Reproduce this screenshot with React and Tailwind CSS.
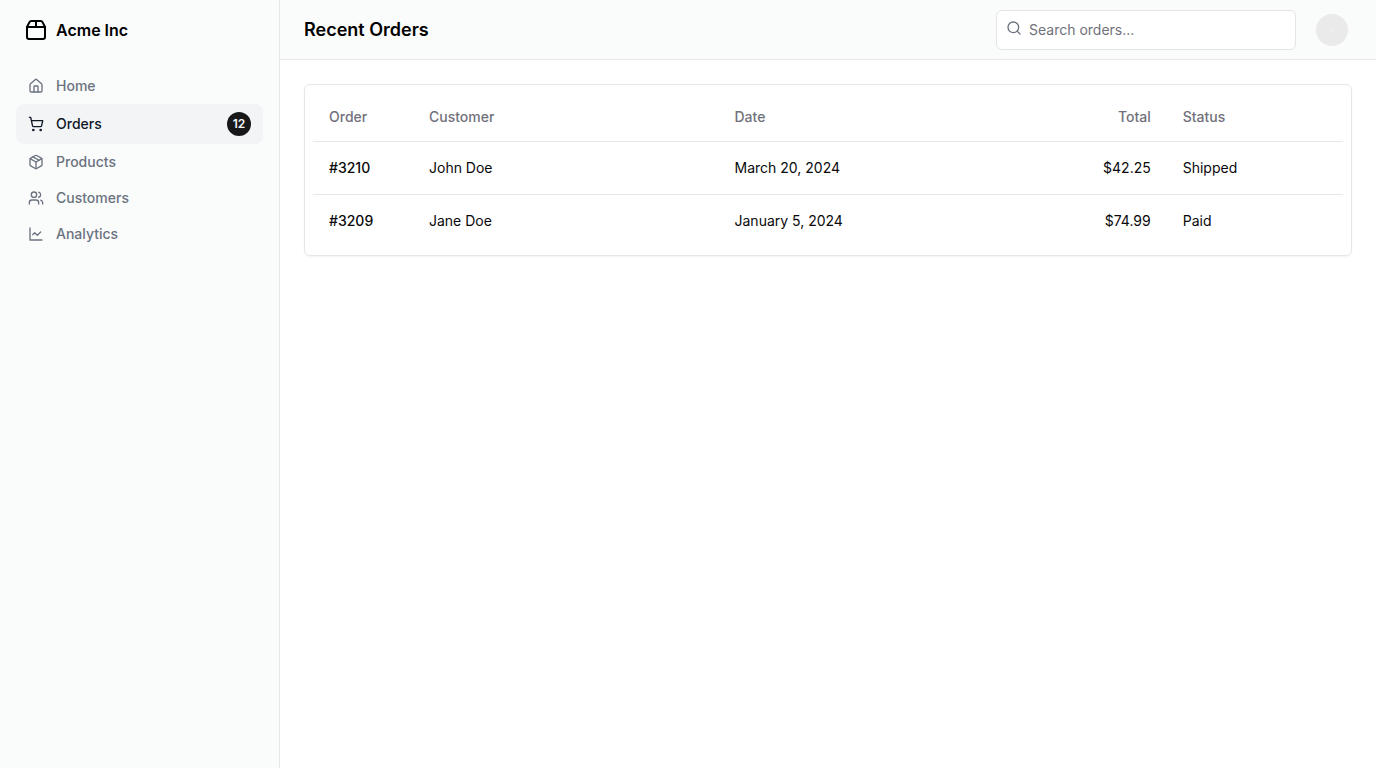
import { House, Package, Search, ShoppingCart, Users } from "lucide-react";

function LogoIcon({ className }) {
  return (
    <svg className={className} viewBox="0 0 24 24" fill="none" stroke="currentColor" strokeWidth="2" strokeLinecap="round" strokeLinejoin="round" aria-hidden="true">
      <path d="M3 9h18v10a2 2 0 0 1-2 2H5a2 2 0 0 1-2-2V9Z" />
      <path d="m3 9 2.45-4.9A2 2 0 0 1 7.24 3h9.52a2 2 0 0 1 1.8 1.1L21 9" />
      <path d="M12 3v6" />
    </svg>
  );
}

function LineChartIcon({ className }) {
  return (
    <svg className={className} viewBox="0 0 24 24" fill="none" stroke="currentColor" strokeWidth="2" strokeLinecap="round" strokeLinejoin="round" aria-hidden="true">
      <path d="M3 3v18h18" />
      <path d="m19 9-5 5-4-4-3 3" />
    </svg>
  );
}

const links = [
  { label: "Home", icon: House },
  { label: "Orders", icon: ShoppingCart, count: 12, active: true },
  { label: "Products", icon: Package },
  { label: "Customers", icon: Users },
  { label: "Analytics", icon: LineChartIcon },
];

const orders = [
  { id: "#3210", customer: "John Doe", date: "March 20, 2024", total: "$42.25", status: "Shipped" },
  { id: "#3209", customer: "Jane Doe", date: "January 5, 2024", total: "$74.99", status: "Paid" },
];

function Sidebar() {
  return (
    <aside className="flex flex-col gap-2 border-r border-gray-200 bg-[#fafcfb]">
      <div className="flex h-[60px] items-center px-6">
        <a href="#" className="flex items-center gap-2 font-semibold text-black">
          <LogoIcon className="size-6" />
          <span>Acme Inc</span>
        </a>
      </div>
      <nav className="flex flex-col px-4 text-sm font-medium">
        {links.map(({ label, icon: Icon, count, active }) => (
          <a
            key={label}
            href="#"
            aria-current={active ? "page" : undefined}
            className={
              active
                ? "flex items-center gap-3 rounded-lg bg-gray-100 px-3 py-2 text-gray-900"
                : "flex items-center gap-3 rounded-lg px-3 py-2 text-[#6b7280]"
            }
          >
            <Icon className="size-4" />
            {label}
            {count && (
              <span className="ml-auto flex size-6 items-center justify-center rounded-full bg-zinc-900 text-xs font-semibold text-zinc-50">
                {count}
              </span>
            )}
          </a>
        ))}
      </nav>
    </aside>
  );
}

function Header() {
  return (
    <header className="flex h-[60px] items-center gap-4 border-b border-gray-200 bg-[#fafcfb] px-6">
      <h1 className="flex-1 text-lg font-semibold text-black">Recent Orders</h1>
      <form className="relative">
        <Search className="absolute top-2.5 left-2.5 size-4 text-[#6b7280]" />
        <input
          type="search"
          aria-label="Search orders"
          placeholder="Search orders..."
          className="block h-10 w-[300px] rounded-md border border-zinc-200 bg-white py-2 pr-3 pl-8 text-sm placeholder:text-zinc-500"
        />
      </form>
      <button type="button" aria-label="Account menu" className="flex size-10 items-center justify-center rounded-full">
        <span className="flex size-8 items-center justify-center rounded-full bg-[#eaeaea]">
          <span className="size-1 rounded-full bg-[#eeeeee]" />
        </span>
      </button>
    </header>
  );
}

function OrdersTable() {
  return (
    <div className="rounded-md border border-gray-200 p-2 shadow-xs">
      <table className="w-full text-sm">
        <thead>
          <tr className="h-12 border-b border-gray-200 text-left text-zinc-500">
            <th className="w-[100px] px-4 font-medium">Order</th>
            <th className="min-w-[150px] px-4 font-medium">Customer</th>
            <th className="px-4 font-medium">Date</th>
            <th className="px-4 text-right font-medium">Total</th>
            <th className="px-4 font-medium">Status</th>
          </tr>
        </thead>
        <tbody>
          {orders.map((order) => (
            <tr key={order.id} className="border-b border-gray-200 last:border-0">
              <td className="p-4 font-medium">{order.id}</td>
              <td className="p-4">{order.customer}</td>
              <td className="p-4">{order.date}</td>
              <td className="p-4 text-right">{order.total}</td>
              <td className="p-4">{order.status}</td>
            </tr>
          ))}
        </tbody>
      </table>
    </div>
  );
}

export default function App() {
  return (
    <div className="grid min-h-screen grid-cols-[280px_1fr] bg-white font-['Inter',sans-serif] text-zinc-950">
      <Sidebar />
      <div className="flex flex-col">
        <Header />
        <main className="flex-1 p-6">
          <OrdersTable />
        </main>
      </div>
    </div>
  );
}
